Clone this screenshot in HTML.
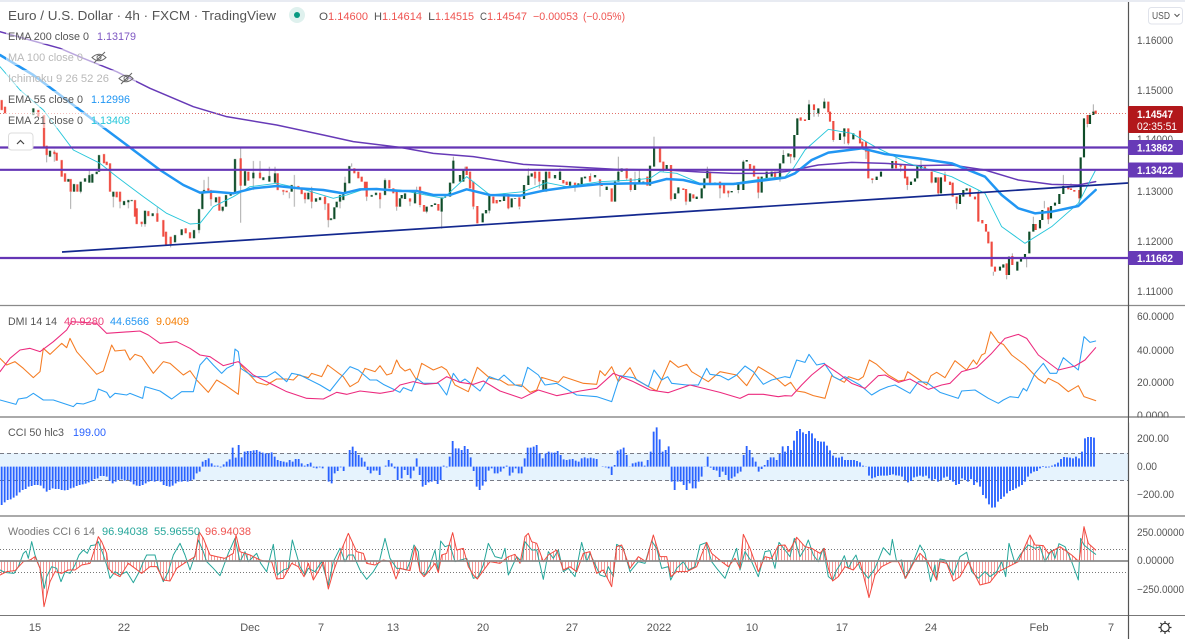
<!DOCTYPE html>
<html><head><meta charset="utf-8"><title>EUR/USD chart</title>
<style>
html,body{margin:0;padding:0;background:#fff;width:1185px;height:639px;overflow:hidden}
svg{display:block}
text{font-family:"Liberation Sans",sans-serif;font-size:11px;fill:#555}
.l{fill:none;stroke-linejoin:round;stroke-linecap:round}
</style></head><body>
<svg width="1185" height="639" viewBox="0 0 1185 639" xmlns="http://www.w3.org/2000/svg">
<defs>
<pattern id="rs" width="9" height="10" patternUnits="userSpaceOnUse"><rect x="3" width="3" height="10" fill="#ef5350" opacity=".6"/></pattern>
</defs>
<rect width="1185" height="639" fill="#fff"/>
<rect width="1185" height="2" fill="#e8ebf2"/>

<!-- CCI band -->
<rect x="0" y="453" width="1128" height="27.5" fill="#e6f3fd"/>
<path d="M0 453.5H1128M0 480.5H1128" stroke="#787b86" stroke-dasharray="4 3" fill="none"/>
<!-- Woodies guide lines -->
<path d="M0 549.5H1128M0 572.5H1128" stroke="#777" stroke-dasharray="1 2" fill="none"/>

<!-- wicks -->
<g transform="scale(.33333)" stroke="#9b9b9b" stroke-width="3" fill="none" opacity=".85">
<path d="M140 465V487M163 450V485M212 575V627M268 512V530M242 575V580M340 590V622M360 605V625M385 607V625M435 672V680M425 672V680M472 622V665M512 732V742M597 690V700M612 540V572M625 530V565M633 598V618M668 632V636M722 445V668M760 483V570M780 483V535M808 500V530M825 500V520M850 575V585M868 577V595M883 525V620M915 598V610M935 560V625M975 612V630M985 660V682M1020 605V625M1035 530V548M1055 490V500M1100 590V603M1140 598V625M1155 535V540M1190 620V632"/>
<g transform="translate(1200 0)"><path d="M30 605V618M50 560V570M60 615V622M80 635V640M125 635V686M160 470V482M195 500V510M220 620V628M268 632V640M325 625V628M358 622V628M385 527V505M405 535V555M418 545V565M480 505V515M525 560V575M572 520V528M600 555V590M655 470V515M680 535V540M692 570V575M705 515V545M718 510V535M762 410V445M790 508V515M813 598V603M858 605V615M922 500V513M960 565V595M985 580V592M1015 570V580M1030 480V485M1075 578V595M1140 535V545M1150 450V465M1172 470V490M1183 472V480"/></g>
<g transform="translate(2355 0)"><path d="M72 300V313M87 330V350M100 340V350M118 295V305M145 420V425M178 410V432M190 430V435M243 455V477M262 540V550M333 470V483M347 500V515M367 555V570M408 480V495M440 548V550M460 580V585M480 515V525M515 610V628M580 570V580M625 815V827M665 825V838M682 760V770M725 772V802M745 650V672M778 603V625M790 658V672M835 525V558M858 550V558M883 595V610M907 372V382M915 340V345M925 313V335"/></g>
</g>

<!-- candles -->
<g transform="scale(.33333)" stroke-width="6.500" fill="none">
<path stroke="#ef4b40" d="M5 300V330M15 320V340M115 330V350M132 345V445M140 437V465M163 455V462M170 458V482M185 480V530M195 520V545M212 537V575M232 553V575M312 462V490M320 485V495M330 490V575M350 575V592M360 575V605M405 600V650M410 625V672M425 665V672M445 633V648M472 640V665M490 660V710M498 695V735M512 710V732M557 685V700M570 697V715M625 565V572M633 570V598M658 590V632M722 475V557M745 515V542M780 518V535M833 520V570M850 570V575M860 572V577M895 558V567M905 565V582M915 578V598M935 573V605M975 590V612M985 610V660M1063 505V520M1075 515V535M1085 530V545M1095 545V570M1100 545V590M1140 578V598M1168 540V565M1180 565V580M1190 570V620"/>
<path stroke="#0e4c28" d="M100 325V345M150 452V470M205 537V545M222 552V575M242 545V575M255 535V545M268 525V548M277 522V548M290 515V522M297 465V515M340 575V590M372 603V615M385 600V607M395 600V603M435 632V672M458 640V648M525 705V727M545 688V705M582 690V715M597 627V690M607 580V627M612 570V580M648 592V607M668 620V632M678 585V620M692 580V587M705 477V580M735 513V557M760 518V535M790 532V540M808 528V545M825 520V548M875 555V575M925 578V598M948 595V605M960 592V600M993 655V660M1003 622V657M1010 605V622M1020 585V605M1030 580V600M1035 548V580M1048 498V550M1115 585V590M1128 578V585M1155 540V585M1200 595V620"/>
<g transform="translate(1200 0)">
<path stroke="#ef4b40" d="M30 595V605M60 560V615M72 615V635M115 612V632M200 500V525M210 515V565M220 545V620M232 618V670M280 590V610M290 600V610M325 582V625M358 592V620M405 515V535M418 515V545M448 515V535M490 540V550M500 545V555M525 548V560M570 528V545M600 538V555M605 550V558M635 565V605M680 505V535M692 535V570M742 530V557M780 445V487M790 485V508M813 495V598M850 565V570M858 567V605M880 583V595M930 515V555M960 545V565M972 550V580M985 572V580M1050 492V510M1062 497V530M1075 530V578M1125 515V535M1172 462V470"/>
<path stroke="#0e4c28" d="M5 585V595M15 580V597M45 570V610M80 620V635M95 615V620M105 610V615M125 592V635M135 590V593M150 548V590M160 482V550M180 525V545M190 510V545M248 640V667M258 630V640M268 582V632M300 600V605M312 580V603M335 595V622M345 595V597M372 555V597M385 527V555M395 520V530M430 540V575M438 515V575M465 525V535M480 515V540M510 545V557M535 550V560M545 532V558M555 530V535M585 525V532M620 560V570M645 545V605M655 515V545M665 505V515M705 550V570M718 535V550M730 545V548M750 497V557M762 445V500M800 495V510M825 580V597M835 562V580M870 580V605M890 590V597M905 565V595M913 535V565M922 513V535M945 548V555M995 573V577M1015 550V570M1030 485V570M1040 480V485M1085 530V578M1100 515V535M1115 515V530M1140 490V535M1150 465V490M1165 460V470"/>
</g>
<g transform="translate(2355 0)">
<path stroke="#ef4b40" d="M47 352V362M60 358V363M87 313V330M130 305V337M135 335V365M145 363V420M190 385V430M225 392V430M232 425V440M243 425V455M250 450V535M262 535V540M333 483V505M347 495V500M360 497V535M367 530V555M420 500V510M440 515V548M460 532V580M480 525V545M495 545V555M503 548V590M515 590V610M555 565V590M570 590V598M580 580V665M592 660V670M603 672V695M610 695V730M620 725V800M630 800V815M665 790V825M682 768V795M752 672V690M790 622V658M850 558V568M858 565V570M868 570V575M883 570V595M908 345V372M932 332V342"/>
<path stroke="#0e4c28" d="M28 405V472M37 355V405M72 313V360M100 325V340M118 305V325M165 400V420M178 385V410M205 400V418M275 530V540M288 515V530M322 483V505M378 545V555M390 535V545M397 495V535M408 495V505M452 532V548M468 532V580M525 585V612M535 570V590M545 565V572M645 800V812M655 793V803M672 770V825M697 785V812M708 772V785M720 762V772M733 695V760M745 672V695M765 660V685M772 630V660M798 618V655M810 608V617M823 582V612M835 558V582M887 472V595M897 355V472M915 345V372M925 335V345"/>
</g>
</g>

<!-- MAs -->
<g transform="scale(.33333)">
<path class="l" stroke="#673ab7" stroke-width="4.500" d="M0 95L90 120L180 145L250 175L350 215L450 265L580 320L680 350L830 375L970 405L1060 425L1200 442L1300 460L1420 470L1570 493L1700 500L1850 508L2000 510L2100 516L2200 520L2300 520L2355 515L2455 495L2555 487L2655 490L2755 497L2855 495L2955 510L3055 540L3155 553L3235 555L3287 545"/>
<path class="l" stroke="#26c6da" stroke-width="2.800" d="M0 200L60 270L130 330L220 450L300 490L350 530L430 590L500 640L570 672L600 670L640 620L700 590L750 560L830 550L900 565L1000 595L1040 585L1100 565L1200 570L1250 580L1330 595L1400 530L1470 585L1570 575L1640 548L1700 560L1800 545L1900 540L1950 535L1980 515L2030 520L2100 550L2200 550L2300 535L2355 530L2380 505L2415 450L2485 388L2555 400L2625 440L2725 490L2855 530L2955 580L3005 680L3075 730L3155 680L3235 610L3287 510"/>
<path class="l" stroke="#2196f3" stroke-width="7.500" d="M0 165L100 225L200 300L300 375L400 450L480 510L550 555L600 578L640 575L700 580L760 565L830 558L900 565L970 570L1030 580L1080 568L1130 567L1200 573L1250 573L1300 585L1350 585L1400 568L1470 585L1560 587L1630 572L1700 562L1800 552L1900 550L1950 550L2000 537L2050 540L2100 552L2200 552L2300 540L2355 533L2385 520L2435 480L2485 458L2585 445L2655 462L2755 475L2855 490L2955 530L3005 585L3055 625L3105 640L3155 635L3235 618L3287 570"/>
</g>

<!-- horizontal levels / trend -->
<path d="M62 252L1128 183" stroke="#13288f" stroke-width="1.700" fill="none"/>
<path d="M0 147.500H1128M0 169.800H1128M0 258H1128" stroke="#6435b5" stroke-width="2.200" fill="none"/>
<path d="M0 113.500H1128" stroke="#e2706a" stroke-dasharray="1 2" fill="none"/>

<!-- DMI -->
<g transform="translate(0 305) scale(.33333)">
<path class="l" stroke="#f57c23" stroke-width="3.200" d="M0 160L20 180L45 170L70 190L100 218L120 200L130 130L150 148L185 115L200 128L210 100L230 140L290 208L310 198L335 120L345 138L375 135L390 165L405 148L425 155L460 205L490 170L510 175L550 210L570 197L590 225L625 262L650 225L675 240L715 268L722 180L770 232L800 240L830 222L860 222L880 225L895 210L925 218L935 205L965 215L983 180L1030 215L1050 245L1075 230L1095 190L1125 200L1140 182L1160 210L1175 205L1190 165L1200 185L1215 198L1230 192L1250 225L1265 175L1300 195L1325 185L1340 195L1365 240L1405 260L1432 187L1470 220L1500 225L1525 240L1565 240L1590 262L1610 255L1625 217L1675 232L1690 215L1720 225L1750 235L1790 238L1800 197L1815 212L1835 185L1855 230L1890 188L1910 225L1970 258L2010 167L2035 187L2060 178L2075 200L2125 230L2160 200L2210 210L2240 242L2275 185L2320 212L2355 243L2372 232L2390 258L2415 262L2440 272L2475 280L2495 212L2533 232L2545 215L2575 225L2590 215L2608 165L2630 178L2665 210L2695 228L2713 225L2723 200L2755 222L2780 240L2793 212L2810 202L2835 218L2865 167L2900 195L2920 165L2930 178L2945 150L2955 145L2972 80L2995 112L3010 118L3035 150L3075 180L3115 222L3135 235L3145 220L3175 235L3205 260L3235 242L3252 275L3287 287"/>
<path class="l" stroke="#2da1f5" stroke-width="3.200" d="M0 285L48 298L55 282L80 278L100 265L130 285L160 285L220 305L230 295L250 297L285 285L295 252L320 262L330 278L345 265L380 270L390 265L428 280L435 245L480 258L515 282L545 260L580 260L600 180L620 158L640 180L665 205L680 190L700 180L705 132L715 140L722 190L760 215L800 215L825 200L860 230L875 205L900 210L960 240L990 258L1020 220L1050 185L1075 195L1110 225L1130 225L1150 238L1200 262L1210 248L1235 258L1250 220L1270 235L1315 235L1340 270L1360 205L1380 232L1395 222L1440 258L1468 215L1495 225L1512 210L1545 240L1565 245L1583 187L1615 210L1635 240L1670 235L1730 270L1790 275L1835 290L1860 212L1900 218L1945 245L1962 195L1985 225L2003 215L2015 235L2060 240L2095 240L2120 190L2130 208L2160 212L2185 225L2210 210L2235 183L2260 200L2290 238L2315 225L2355 215L2370 218L2390 165L2415 172L2427 148L2450 180L2473 175L2500 215L2520 225L2535 215L2580 240L2615 270L2640 255L2665 245L2685 240L2730 265L2755 230L2780 232L2820 262L2875 280L2885 258L2925 255L2965 280L2995 295L3010 285L3030 275L3055 278L3070 250L3080 258L3105 205L3130 175L3150 205L3170 205L3190 158L3235 195L3252 95L3270 112L3287 108"/>
<path class="l" stroke="#ec2a7e" stroke-width="3.200" d="M0 200L30 160L60 135L90 130L120 140L160 110L200 75L215 50L290 55L320 85L420 78L445 90L480 115L530 110L570 130L600 150L630 155L670 182L715 170L760 210L820 240L860 260L920 280L970 282L1010 262L1040 268L1080 258L1140 265L1180 258L1200 240L1240 230L1275 238L1310 235L1340 215L1380 232L1420 238L1450 228L1500 258L1565 280L1615 255L1670 272L1740 258L1790 250L1840 205L1900 230L1950 255L2005 263L2070 240L2160 262L2220 280L2245 268L2290 268L2335 275L2355 272L2375 273L2405 240L2435 210L2475 178L2515 205L2555 235L2595 250L2635 212L2655 210L2695 232L2730 222L2785 253L2825 240L2850 235L2885 200L2930 188L2975 145L3015 100L3055 88L3080 100L3115 150L3175 195L3225 183L3255 165L3287 128"/>
</g>

<!-- CCI bars -->
<g transform="translate(0 305) scale(.33333)" stroke="#2962ff" stroke-width="5.500" fill="none">
<path d="M5 485V600M14 485V592M23 485V585M32 485V583M41 485V578M50 485V572M59 485V562M68 485V555M77 485V552M86 485V545M95 485V543M104 485V540M113 485V540M122 485V542M131 485V550M140 485V560M149 485V555M158 485V550M167 485V552M176 485V552M185 485V555M194 485V556M203 485V555M212 485V550M221 485V548M230 485V543M239 485V540M248 485V538M257 485V536M266 485V532M275 485V528M284 485V522M293 485V520M302 485V513M311 485V513M320 485V515M329 485V528M338 485V535M347 485V530M356 485V525M365 485V523M374 485V527M383 485V525M392 485V530M401 485V538M410 485V542M419 485V543M428 485V540M437 485V535M446 485V530M455 485V528M464 485V530M473 485V528M482 485V530M491 485V540M500 485V543M509 485V545M518 485V542M527 485V535M536 485V530M545 485V530M554 485V528M563 485V530M572 485V527M581 485V523M590 485V505M599 485V500M608 485V470M617 485V465M626 485V460M635 485V475M644 485V482M653 485V482M662 485V487M671 485V478M680 485V470M689 485V463M698 485V428M707 485V458M716 485V420M725 485V457M734 485V440M743 485V438M752 485V438M761 485V436M770 485V435M779 485V440M788 485V443M797 485V445M806 485V445M815 485V442M824 485V455M833 485V465M842 485V468M851 485V470M860 485V472M869 485V465M878 485V470M887 485V462M896 485V462M905 485V475M914 485V482M923 485V477M932 485V473M941 485V488M950 485V490M959 485V487M968 485V490M986 485V530M995 485V535M1004 485V505M1013 485V498M1022 485V487M1031 485V498M1049 485V435M1058 485V425M1067 485V438M1076 485V450M1085 485V458M1094 485V470M1103 485V495M1112 485V505M1121 485V497M1130 485V497M1139 485V510M1157 485V482M1166 485V465M1175 485V475M1184 485V490M1193 485V525"/>
<g transform="translate(1200 0)"><path d="M5 485V520M14 485V495M23 485V510M32 485V520M41 485V497M50 485V460M59 485V510M68 485V545M77 485V540M86 485V532M95 485V530M104 485V527M113 485V537M122 485V525M131 485V482M140 485V487M149 485V455M158 485V408M167 485V430M176 485V430M185 485V435M194 485V423M203 485V432M212 485V457M221 485V498M230 485V545M239 485V555M248 485V542M257 485V530M266 485V497M275 485V490M284 485V505M293 485V505M302 485V500M311 485V490M320 485V482M329 485V512M338 485V503M347 485V490M356 485V505M365 485V505M374 485V460M383 485V428M392 485V428M401 485V425M410 485V420M419 485V445M428 485V460M437 485V445M446 485V440M455 485V443M464 485V443M473 485V438M482 485V450M491 485V463M500 485V465M509 485V463M518 485V462M527 485V467M536 485V470M545 485V460M554 485V457M563 485V460M572 485V458M581 485V460M590 485V462M599 485V485M608 485V486M617 485V487M626 485V490M635 485V510M644 485V480M653 485V437M662 485V433M671 485V428M680 485V450M689 485V484M698 485V475M707 485V473M716 485V470M725 485V470M734 485V482M743 485V465M752 485V440M761 485V380M770 485V367M779 485V403M788 485V440M797 485V435M806 485V424M815 485V530M824 485V555M833 485V530M842 485V530M851 485V540M860 485V555M869 485V535M878 485V550M887 485V550M896 485V530M905 485V515M914 485V484M923 485V455M932 485V488M941 485V495M950 485V497M959 485V516M968 485V500M977 485V510M986 485V525M995 485V520M1004 485V515M1013 485V505M1022 485V500M1031 485V450M1040 485V423M1049 485V435M1058 485V457M1067 485V470M1076 485V500M1085 485V492M1094 485V480M1103 485V465M1112 485V457M1121 485V457M1130 485V465M1139 485V447M1148 485V424"/></g>
<g transform="translate(2355 0)"><path d="M0 485V440M9 485V423M18 485V435M27 485V407M36 485V378M45 485V372M54 485V382M63 485V387M72 485V378M81 485V385M90 485V400M99 485V408M108 485V410M117 485V410M126 485V422M135 485V436M144 485V452M153 485V458M162 485V458M171 485V455M180 485V465M189 485V465M198 485V465M207 485V465M216 485V468M225 485V472M234 485V482M243 485V484M252 485V512M261 485V520M270 485V517M279 485V513M288 485V512M297 485V512M306 485V512M315 485V510M324 485V508M333 485V511M342 485V512M351 485V515M360 485V525M369 485V532M378 485V528M387 485V517M396 485V515M405 485V512M414 485V515M423 485V512M432 485V520M441 485V526M450 485V522M459 485V530M468 485V525M477 485V518M486 485V515M495 485V525M504 485V530M513 485V540M522 485V537M531 485V520M540 485V525M549 485V530M558 485V522M567 485V540M576 485V532M585 485V545M594 485V570M603 485V580M612 485V598M621 485V608M630 485V607M639 485V590M648 485V582M657 485V575M666 485V565M675 485V558M684 485V555M693 485V550M702 485V545M711 485V540M720 485V530M729 485V515M738 485V505M747 485V500M756 485V498M765 485V490M774 485V483M783 485V488M792 485V487M801 485V482M810 485V478M819 485V473M828 485V462M837 485V456M846 485V457M855 485V458M864 485V460M873 485V455M882 485V460M891 485V440M900 485V400M909 485V396M918 485V396M927 485V398"/></g>
</g>

<!-- Woodies -->
<g transform="translate(0 305) scale(.33333)">
<path fill="url(#rs)" d="M0 768V810L20 800L45 797L70 770L90 765L105 755L120 790L132 905L150 830L165 800L185 805L205 795L225 795L245 780L270 775L285 730L295 695L305 710L320 745L325 790L340 805L360 815L385 775L405 790L425 805L450 785L470 785L490 825L510 828L530 790L560 770L585 755L597 680L610 700L630 750L650 755L675 760L700 745L708 690L720 740L735 745L750 750L780 765L800 770L815 770L830 822L850 820L875 775L895 785L912 815L925 775L940 825L960 790L970 770L985 852L1000 800L1020 745L1045 685L1070 740L1090 745L1100 775L1125 780L1150 765L1170 770L1188 822L1200 790L1230 797L1245 725L1260 800L1272 815L1290 795L1305 775L1315 803L1325 750L1340 745L1358 683L1370 735L1390 730L1405 785L1420 810L1432 822L1455 790L1470 770L1500 775L1525 755L1545 748L1560 775L1575 695L1585 685L1595 710L1610 715L1630 770L1645 750L1670 735L1690 795L1710 785L1730 800L1750 745L1770 740L1790 805L1810 795L1835 845L1850 725L1865 720L1890 790L1915 755L1938 770L1960 690L1980 755L2000 755L2013 815L2030 800L2060 800L2090 785L2120 712L2135 745L2165 770L2185 785L2205 760L2220 790L2230 688L2250 730L2275 800L2295 755L2315 760L2335 722L2355 720L2367 740L2390 697L2415 725L2435 730L2460 745L2473 730L2485 790L2498 828L2515 815L2535 785L2560 795L2580 770L2607 878L2625 810L2645 785L2675 770L2695 770L2717 820L2740 775L2760 745L2780 765L2810 825L2820 770L2840 775L2860 828L2880 815L2905 770L2940 840L2970 832L2995 800L3025 785L3055 770L3090 690L3105 720L3130 722L3145 745L3180 725L3215 750L3237 770L3252 665L3265 715L3287 735V768Z"/>
<path class="l" stroke="#26a69a" stroke-width="3" d="M0 795L10 800L20 803L42 805L55 785L70 745L78 738L85 760L95 710L105 750L120 790L133 850L140 815L155 785L170 790L183 830L195 800L210 805L225 780L237 750L250 735L262 745L272 722L285 720L295 710L310 750L320 780L330 820L345 800L360 810L380 800L400 833L418 800L430 770L440 750L465 750L475 790L490 830L505 800L520 750L540 715L555 750L570 795L585 750L595 705L610 740L620 770L640 790L660 812L672 780L685 745L705 700L720 770L735 740L745 770L770 745L782 775L800 800L820 718L832 810L850 795L865 790L877 705L890 750L900 785L915 810L925 790L945 800L965 770L985 840L1000 770L1020 730L1035 770L1045 750L1060 750L1080 795L1100 823L1120 800L1138 770L1155 700L1170 760L1190 790L1200 790L1220 795L1230 770L1242 720L1255 740L1260 800L1275 810L1290 780L1305 735L1315 800L1322 708L1335 725L1350 720L1365 770L1400 760L1420 820L1435 815L1450 780L1465 715L1485 755L1505 760L1515 730L1525 810L1550 755L1565 770L1575 710L1595 735L1610 735L1630 823L1645 740L1660 760L1675 735L1690 800L1705 790L1725 815L1745 712L1760 770L1770 745L1800 810L1815 815L1825 785L1840 815L1850 718L1870 730L1890 800L1915 770L1935 775L1955 708L1970 730L1985 790L2005 785L2012 825L2030 790L2050 770L2065 795L2085 785L2100 720L2118 713L2135 770L2150 790L2175 820L2190 780L2210 730L2220 795L2235 740L2255 770L2275 815L2295 740L2310 737L2325 790L2337 712L2355 735L2370 755L2383 700L2400 755L2415 730L2425 705L2440 750L2455 770L2470 730L2485 815L2498 825L2510 795L2520 780L2533 752L2545 790L2555 770L2568 750L2580 790L2605 820L2625 790L2650 728L2670 750L2677 703L2690 770L2705 765L2715 820L2740 770L2760 720L2775 745L2792 830L2805 780L2810 825L2820 762L2835 765L2860 810L2880 755L2900 742L2915 800L2935 820L2955 800L2970 815L2990 800L3005 770L3017 815L3027 715L3045 775L3060 750L3085 720L3105 730L3120 725L3135 770L3155 735L3165 760L3177 716L3195 725L3215 770L3235 825L3242 700L3252 720L3270 735L3287 748"/>
<path class="l" stroke="#f2483e" stroke-width="3" d="M0 810L20 800L45 797L70 770L90 765L105 755L120 790L132 905L150 830L165 800L185 805L205 795L225 795L245 780L270 775L285 730L295 695L305 710L320 745L325 790L340 805L360 815L385 775L405 790L425 805L450 785L470 785L490 825L510 828L530 790L560 770L585 755L597 680L610 700L630 750L650 755L675 760L700 745L708 690L720 740L735 745L750 750L780 765L800 770L815 770L830 822L850 820L875 775L895 785L912 815L925 775L940 825L960 790L970 770L985 852L1000 800L1020 745L1045 685L1070 740L1090 745L1100 775L1125 780L1150 765L1170 770L1188 822L1200 790L1230 797L1245 725L1260 800L1272 815L1290 795L1305 775L1315 803L1325 750L1340 745L1358 683L1370 735L1390 730L1405 785L1420 810L1432 822L1455 790L1470 770L1500 775L1525 755L1545 748L1560 775L1575 695L1585 685L1595 710L1610 715L1630 770L1645 750L1670 735L1690 795L1710 785L1730 800L1750 745L1770 740L1790 805L1810 795L1835 845L1850 725L1865 720L1890 790L1915 755L1938 770L1960 690L1980 755L2000 755L2013 815L2030 800L2060 800L2090 785L2120 712L2135 745L2165 770L2185 785L2205 760L2220 790L2230 688L2250 730L2275 800L2295 755L2315 760L2335 722L2355 720L2367 740L2390 697L2415 725L2435 730L2460 745L2473 730L2485 790L2498 828L2515 815L2535 785L2560 795L2580 770L2607 878L2625 810L2645 785L2675 770L2695 770L2717 820L2740 775L2760 745L2780 765L2810 825L2820 770L2840 775L2860 828L2880 815L2905 770L2940 840L2970 832L2995 800L3025 785L3055 770L3090 690L3105 720L3130 722L3145 745L3180 725L3215 750L3237 770L3252 665L3265 715L3287 735"/>
<path d="M0 768H3384" stroke="#8a8a8a" stroke-width="5" fill="none"/>
</g>

<!-- pane separators -->
<path d="M0 305.500H1185" stroke="#8a8a8a" stroke-width="1.200" fill="none"/>
<path d="M0 417H1185" stroke="#555" stroke-width="1" fill="none"/>
<path d="M0 516H1185" stroke="#555" stroke-width="1" fill="none"/>
<path d="M0 615.500H1185" stroke="#777" stroke-width="1" fill="none"/>
<path d="M1128.500 2V639" stroke="#555" stroke-width="1.200" fill="none"/>

<!-- legend halos -->
<rect x="6" y="28" width="132" height="16" fill="#fff" opacity=".55"/>
<rect x="6" y="49" width="102" height="16" fill="#fff" opacity=".55"/>
<rect x="6" y="70" width="130" height="16" fill="#fff" opacity=".55"/>
<rect x="6" y="91" width="126" height="16" fill="#fff" opacity=".55"/>
<rect x="6" y="112" width="126" height="16" fill="#fff" opacity=".55"/>

<!-- header -->
<text x="8" y="20" style="font-size:13px" textLength="268" lengthAdjust="spacingAndGlyphs">Euro / U.S. Dollar · 4h · FXCM · TradingView</text>
<circle cx="297" cy="15" r="8" fill="#dff1ee"/><circle cx="297" cy="15" r="3" fill="#089981"/>
<text x="319" y="20" textLength="9" lengthAdjust="spacingAndGlyphs">O</text><text x="328" y="20" style="fill:#ef5350" textLength="40" lengthAdjust="spacingAndGlyphs">1.14600</text>
<text x="374" y="20" textLength="8" lengthAdjust="spacingAndGlyphs">H</text><text x="382" y="20" style="fill:#ef5350" textLength="40" lengthAdjust="spacingAndGlyphs">1.14614</text>
<text x="428" y="20" textLength="7" lengthAdjust="spacingAndGlyphs">L</text><text x="435" y="20" style="fill:#ef5350" textLength="39" lengthAdjust="spacingAndGlyphs">1.14515</text>
<text x="480" y="20" textLength="7" lengthAdjust="spacingAndGlyphs">C</text><text x="487" y="20" style="fill:#ef5350" textLength="40" lengthAdjust="spacingAndGlyphs">1.14547</text>
<text x="533" y="20" style="fill:#ef5350" textLength="45" lengthAdjust="spacingAndGlyphs">−0.00053</text>
<text x="583" y="20" style="fill:#ef5350" textLength="42" lengthAdjust="spacingAndGlyphs">(−0.05%)</text>

<text x="8" y="40" textLength="81" lengthAdjust="spacingAndGlyphs">EMA 200 close 0</text><text x="97" y="40" style="fill:#7e57c2" textLength="39" lengthAdjust="spacingAndGlyphs">1.13179</text>
<text x="8" y="61" style="fill:#b9b9b9" textLength="75" lengthAdjust="spacingAndGlyphs">MA 100 close 0</text>
<g fill="none" stroke="#666" stroke-width="1"><path d="M92 57.500Q99 51 106 57.500Q99 64 92 57.500Z"/><circle cx="99" cy="57.500" r="2"/><path d="M94 63L105 52"/></g>
<text x="8" y="82" style="fill:#b9b9b9" textLength="101" lengthAdjust="spacingAndGlyphs">Ichimoku 9 26 52 26</text>
<g fill="none" stroke="#666" stroke-width="1"><path d="M119 78.500Q126 72 133 78.500Q126 85 119 78.500Z"/><circle cx="126" cy="78.500" r="2"/><path d="M121 84L132 73"/></g>
<text x="8" y="103" textLength="75" lengthAdjust="spacingAndGlyphs">EMA 55 close 0</text><text x="91" y="103" style="fill:#2196f3" textLength="39" lengthAdjust="spacingAndGlyphs">1.12996</text>
<text x="8" y="124" textLength="75" lengthAdjust="spacingAndGlyphs">EMA 21 close 0</text><text x="91" y="124" style="fill:#26c6da" textLength="39" lengthAdjust="spacingAndGlyphs">1.13408</text>
<rect x="8.500" y="133" width="24.500" height="17" rx="3" fill="#fff" stroke="#dcdcdc"/>
<path d="M17 144L20.500 140.500L24 144" fill="none" stroke="#444" stroke-width="1.200"/>

<!-- pane legends -->
<text x="8" y="325" textLength="49" lengthAdjust="spacingAndGlyphs">DMI 14 14</text><text x="64" y="325" style="fill:#ec407a" textLength="40" lengthAdjust="spacingAndGlyphs">40.9280</text><text x="110" y="325" style="fill:#2196f3" textLength="39" lengthAdjust="spacingAndGlyphs">44.6566</text><text x="156" y="325" style="fill:#f57c00" textLength="33" lengthAdjust="spacingAndGlyphs">9.0409</text>
<text x="8" y="436" textLength="56" lengthAdjust="spacingAndGlyphs">CCI 50 hlc3</text><text x="73" y="436" style="fill:#2962ff" textLength="33" lengthAdjust="spacingAndGlyphs">199.00</text>
<text x="8" y="535" style="fill:#777" textLength="87" lengthAdjust="spacingAndGlyphs">Woodies CCI 6 14</text><text x="102" y="535" style="fill:#26a69a" textLength="46" lengthAdjust="spacingAndGlyphs">96.94038</text><text x="154" y="535" style="fill:#26a69a" textLength="46" lengthAdjust="spacingAndGlyphs">55.96550</text><text x="205" y="535" style="fill:#ef5350" textLength="46" lengthAdjust="spacingAndGlyphs">96.94038</text>

<!-- price axis -->
<rect x="1148.500" y="7.500" width="34" height="16.500" rx="3" fill="#fff" stroke="#e0e3eb"/>
<text x="1152" y="19" style="font-size:10.500px" textLength="18" lengthAdjust="spacingAndGlyphs">USD</text>
<path d="M1174.500 14L1177 16.500L1179.500 14" fill="none" stroke="#555"/>
<g>
<text x="1137" y="44" textLength="36" lengthAdjust="spacingAndGlyphs">1.16000</text>
<text x="1137" y="94" textLength="36" lengthAdjust="spacingAndGlyphs">1.15000</text>
<text x="1137" y="143" textLength="36" lengthAdjust="spacingAndGlyphs">1.14000</text>
<text x="1137" y="195" textLength="36" lengthAdjust="spacingAndGlyphs">1.13000</text>
<text x="1137" y="245" textLength="36" lengthAdjust="spacingAndGlyphs">1.12000</text>
<text x="1137" y="295" textLength="36" lengthAdjust="spacingAndGlyphs">1.11000</text>
<text x="1137" y="320" textLength="37" lengthAdjust="spacingAndGlyphs">60.0000</text>
<text x="1137" y="354" textLength="37" lengthAdjust="spacingAndGlyphs">40.0000</text>
<text x="1137" y="386" textLength="37" lengthAdjust="spacingAndGlyphs">20.0000</text>
<text x="1137" y="419" textLength="32" lengthAdjust="spacingAndGlyphs">0.0000</text>
<text x="1137" y="442" textLength="32" lengthAdjust="spacingAndGlyphs">200.00</text>
<text x="1137" y="470" textLength="20" lengthAdjust="spacingAndGlyphs">0.00</text>
<text x="1137" y="498" textLength="37" lengthAdjust="spacingAndGlyphs">−200.00</text>
<text x="1137" y="536" textLength="47" lengthAdjust="spacingAndGlyphs">250.00000</text>
<text x="1137" y="564" textLength="37" lengthAdjust="spacingAndGlyphs">0.00000</text>
<text x="1137" y="593" textLength="47" lengthAdjust="spacingAndGlyphs">−250.0000</text>
</g>
<rect x="1129" y="417.600" width="56" height="5" fill="#fff"/>
<path d="M0 417H1185" stroke="#555" fill="none"/>

<!-- price tags -->
<rect x="1128" y="106" width="55" height="27" rx="1.500" fill="#b2181b"/>
<text x="1137" y="118" style="fill:#fff;font-weight:bold" textLength="36" lengthAdjust="spacingAndGlyphs">1.14547</text>
<text x="1137" y="130" style="fill:#fff" textLength="40" lengthAdjust="spacingAndGlyphs">02:35:51</text>
<rect x="1128" y="140" width="55" height="15" rx="1.500" fill="#673ab7"/>
<text x="1137" y="151.500" style="fill:#fff;font-weight:bold" textLength="36" lengthAdjust="spacingAndGlyphs">1.13862</text>
<rect x="1128" y="162.500" width="55" height="15" rx="1.500" fill="#673ab7"/>
<text x="1137" y="174" style="fill:#fff;font-weight:bold" textLength="36" lengthAdjust="spacingAndGlyphs">1.13422</text>
<rect x="1128" y="251" width="55" height="14" rx="1.500" fill="#673ab7"/>
<text x="1137" y="262" style="fill:#fff;font-weight:bold" textLength="36" lengthAdjust="spacingAndGlyphs">1.11662</text>

<!-- time axis -->
<g text-anchor="middle">
<text x="35" y="631">15</text><text x="124" y="631">22</text><text x="250" y="631">Dec</text><text x="321" y="631">7</text><text x="393" y="631">13</text><text x="483" y="631">20</text><text x="572" y="631">27</text><text x="659" y="631">2022</text><text x="752" y="631">10</text><text x="842" y="631">17</text><text x="931" y="631">24</text><text x="1039" y="631">Feb</text><text x="1111" y="631">7</text>
</g>
<g fill="none" stroke="#333" stroke-width="1.200">
<circle cx="1165" cy="627.500" r="4.200"/>
<path d="M1165 621V623.300M1165 631.700V634M1158.500 627.500H1160.800M1169.200 627.500H1171.500M1160.400 622.900L1162 624.500M1168 630.500L1169.600 632.100M1160.400 632.100L1162 630.500M1168 624.500L1169.600 622.900"/>
</g>
</svg>
</body></html>
